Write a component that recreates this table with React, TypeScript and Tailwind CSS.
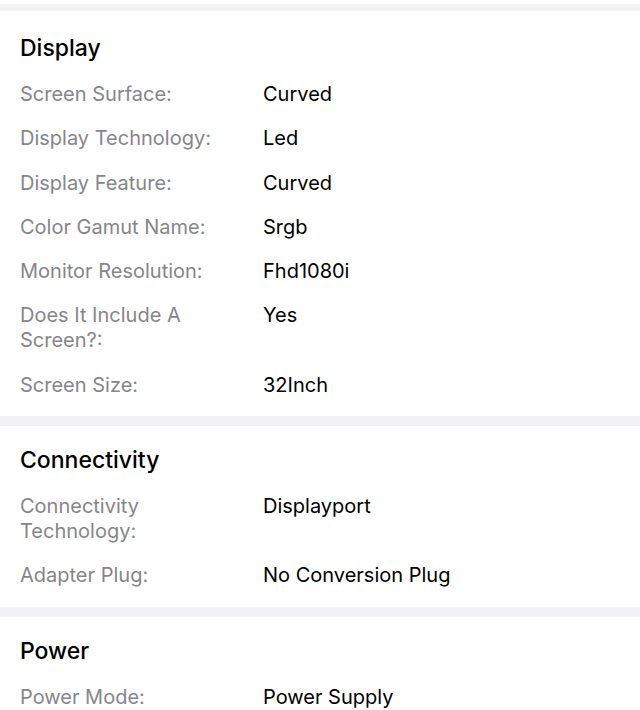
const sections = [
  {
    title: "Display",
    rows: [
      ["Screen Surface:", "Curved"],
      ["Display Technology:", "Led"],
      ["Display Feature:", "Curved"],
      ["Color Gamut Name:", "Srgb"],
      ["Monitor Resolution:", "Fhd1080i"],
      ["Does It Include A Screen?:", "Yes"],
      ["Screen Size:", "32Inch"],
    ],
  },
  {
    title: "Connectivity",
    rows: [
      ["Connectivity Technology:", "Displayport"],
      ["Adapter Plug:", "No Conversion Plug"],
    ],
  },
  {
    title: "Power",
    rows: [["Power Mode:", "Power Supply"]],
  },
];

export default function App() {
  return (
    <div className="h-[710px] w-[640px] overflow-hidden bg-white pt-1 font-['Inter',sans-serif]">
      <div className="h-[7px] bg-[#f2f2f4]" />
      {sections.map((s, i) => (
        <div key={s.title}>
          {i > 0 && <div className="h-[10px] bg-[#f2f2f4]" />}
          <section className={`px-5 ${i === 0 ? "pt-[23px] pb-[18px]" : "pt-5 pb-[19px]"}`}>
            <h2 className="text-[23px] font-medium leading-[28px] text-black">{s.title}</h2>
            <div className="mt-5 flex flex-col gap-[19.3px]">
              {s.rows.map(([label, value]) => (
                <div key={label} className="flex text-[20px] leading-[25px]">
                  <div className="w-[215px] shrink-0 text-[#86868a]">{label}</div>
                  <div className="ml-[28px] text-black">{value}</div>
                </div>
              ))}
            </div>
          </section>
        </div>
      ))}
    </div>
  );
}
